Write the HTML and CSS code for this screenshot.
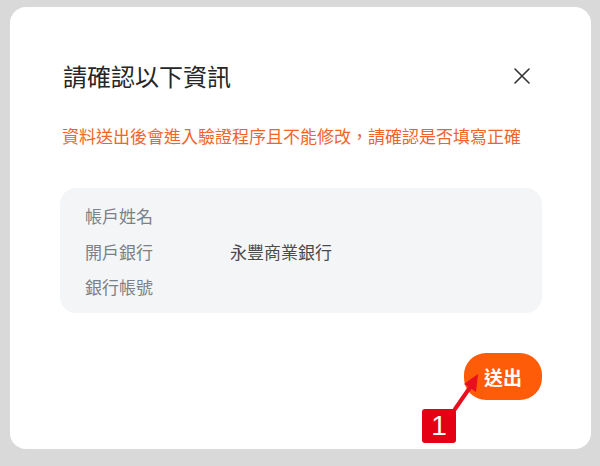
FILE: index.html
```html
<!DOCTYPE html>
<html lang="zh-Hant">
<head>
<meta charset="utf-8">
<title>請確認以下資訊</title>
<link rel="stylesheet" href="styles.css">
</head>
<body>
<div class="modal">
  <div class="modal-header">
    <h2 class="modal-title">請確認以下資訊</h2>
    <button class="close-btn" aria-label="關閉">
      <svg width="16" height="16" viewBox="0 0 16 16"><path d="M1 1 L15 15 M15 1 L1 15" stroke="#333" stroke-width="1.6" fill="none" stroke-linecap="round"/></svg>
    </button>
  </div>
  <p class="warning">資料送出後會進入驗證程序且不能修改，請確認是否填寫正確</p>
  <div class="info-box">
    <div class="info-row"><span class="info-label">帳戶姓名</span><span class="info-value"></span></div>
    <div class="info-row"><span class="info-label">開戶銀行</span><span class="info-value">永豐商業銀行</span></div>
    <div class="info-row"><span class="info-label">銀行帳號</span><span class="info-value"></span></div>
  </div>
  <div class="actions">
    <button class="submit-btn">送出</button>
  </div>
</div>
<svg class="callout-arrow" width="40" height="50" viewBox="0 0 40 50">
  <line x1="4" y1="45" x2="20" y2="22" stroke="#e8101e" stroke-width="4" stroke-linecap="round"/>
  <polygon points="27,10 13,20 25,28" fill="#e8101e"/>
</svg>
<div class="callout-badge">1</div>
</body>
</html>
```

FILE: styles.css
```css
html, body {
  margin: 0;
  padding: 0;
}
body {
  width: 600px;
  height: 466px;
  background: #d9d9d9;
  font-family: "Noto Sans CJK TC", "Noto Sans", sans-serif;
  position: relative;
  overflow: hidden;
}
.modal {
  box-sizing: border-box;
  margin: 7px 0 0 10px;
  width: 581px;
  height: 442px;
  background: #ffffff;
  border-radius: 16px;
  padding: 53px 49px 0 50px;
}
.modal-header {
  display: flex;
  align-items: center;
  justify-content: space-between;
  height: 32px;
  padding: 0 12px 0 3px;
}
.modal-title {
  margin: 0;
  font-size: 24px;
  line-height: 32px;
  font-weight: 400;
  color: #262626;
}
.close-btn {
  border: 0;
  background: none;
  padding: 0;
  width: 16px;
  height: 16px;
  display: flex;
}
.warning {
  margin: 32px 0 0 0;
  padding-left: 2px;
  font-size: 17px;
  line-height: 24px;
  color: #f0642a;
}
.info-box {
  margin-top: 40px;
  background: #f4f5f7;
  border-radius: 16px;
  padding: 16px 25px 14px;
  display: flex;
  flex-direction: column;
  gap: 11.5px;
}
.info-row {
  display: flex;
  font-size: 17px;
  line-height: 24px;
  height: 24px;
}
.info-label {
  width: 145px;
  color: #7b8089;
}
.info-value {
  color: #4a4a4a;
}
.actions {
  display: flex;
  justify-content: flex-end;
  margin-top: 40px;
}
.submit-btn {
  width: 78px;
  height: 47px;
  border: 0;
  border-radius: 22px;
  background: #ff5c0a;
  color: #ffffff;
  font-family: "Noto Sans CJK TC", sans-serif;
  font-size: 19px;
  font-weight: 700;
  padding: 0;
}
.callout-arrow {
  position: absolute;
  left: 451px;
  top: 364px;
}
.callout-badge {
  position: absolute;
  left: 422px;
  top: 409px;
  width: 34px;
  height: 34px;
  background: #e60014;
  border-radius: 3px;
  color: #ffffff;
  font-family: "Liberation Sans", Arial, sans-serif;
  font-size: 28px;
  line-height: 34px;
  text-align: center;
}
```
